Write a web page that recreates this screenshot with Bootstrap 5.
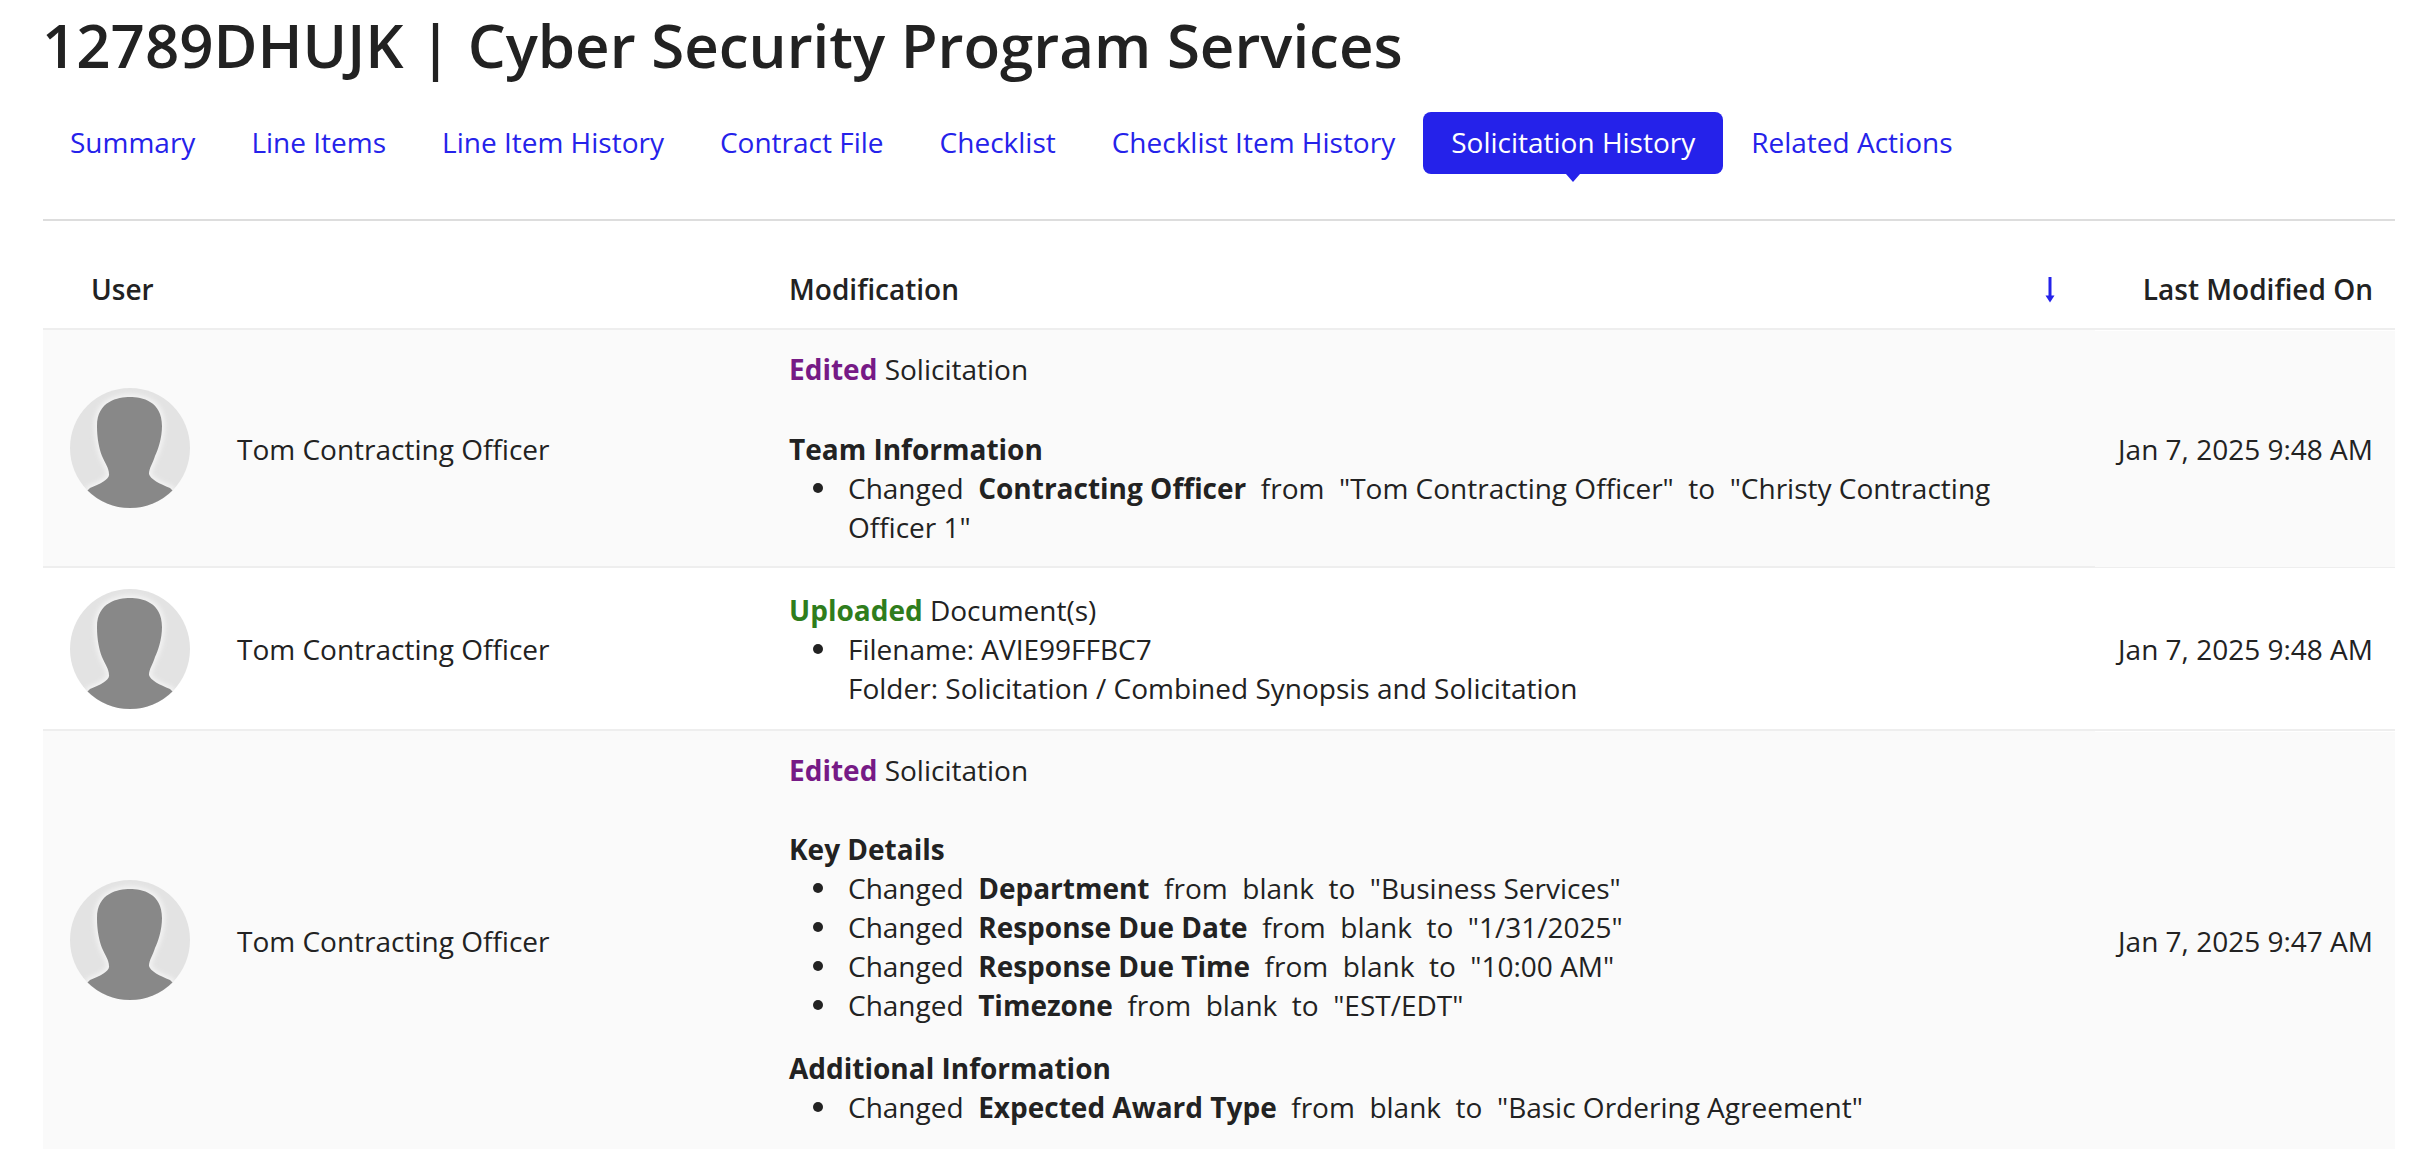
<!DOCTYPE html>
<html lang="en"><head><meta charset="utf-8"><title>Solicitation History</title>
<link href="https://cdn.jsdelivr.net/npm/bootstrap@5.3.0/dist/css/bootstrap.min.css" rel="stylesheet">
<style>
body{font-family:"Open Sans","Noto Sans",sans-serif;font-size:28px;line-height:39px;color:#222;background:#fff;overflow:hidden}
.pagewrap{padding:0 17px 0 43px}
.pagetitle{font-family:"Open Sans","Noto Sans",sans-serif;font-size:60px;line-height:80px;font-weight:600;margin:5px 0 27px -1px;color:#222}
.tabs{height:62px;margin-left:-1px}
.tabs .nav-link{font-size:28px;line-height:38px;padding:11px 28px 13px;color:#2522ea;border-radius:8px;position:relative}
.tabs .nav-link.active{background:#2522ea;color:#fff}
.tabs .nav-link.active::after{content:"";position:absolute;left:50%;top:100%;margin-left:-7px;border:7px solid transparent;border-top:8px solid #2522ea;border-bottom:0}
.rule{border-top:2px solid #ddd;margin-top:45px}
.hist{table-layout:fixed;width:100%;margin:0;--bs-table-bg:transparent;--bs-table-color:#222}
.hist th{font-weight:600;height:108px;padding:30px 0 0;vertical-align:middle;border-bottom:2px solid #eee}
.hist td{padding:20px 0;vertical-align:middle;border-bottom:2px solid #eee}
.hist tr.shade td{background:#fafafa}
.hist tbody tr:last-child td{border-bottom:0}
.col-u{width:720px}.col-d{width:300px}
.hist th.h-user{padding-left:48px}
.hist td.c-user{padding-left:27px}
.hist th.h-mod,.hist td.c-mod{padding-left:26px}
.hist th.h-date,.hist td.c-date{text-align:right;padding-right:22px}
.hist td.c-mod{padding-right:60px;vertical-align:top}
.hist tr.row-first td.c-mod{padding-bottom:19px}
.hist tr.row-first .sect{margin-top:41px}
.hist tr.row-up td.c-mod{padding-top:23px;padding-bottom:21px}
.hist tr.row-last td.c-mod{padding-bottom:22px}
.hist td.c-user span,.hist td.c-date{position:relative;top:1px}
.usr{gap:47px}
.avatar{width:120px;height:120px;flex:none}
.sortarrow{margin-right:40px}
.act-e{color:#761a86;font-weight:700}
.act-u{color:#2f7d1c;font-weight:700}
.sect{margin-top:40px;font-weight:700}
.sect2{margin-top:24px;font-weight:700}
.chg{margin:0;padding-left:59px;list-style:none}
.chg li{position:relative}
.chg li::before{content:"";position:absolute;left:-35px;top:14px;width:10px;height:10px;border-radius:50%;background:#222}
.chg b{font-weight:700}
</style></head><body>
<svg width="0" height="0" class="position-absolute">
<defs>
<filter id="soft" x="-20%" y="-20%" width="140%" height="140%"><feGaussianBlur stdDeviation="2"/></filter>
<clipPath id="disc"><circle cx="60" cy="60" r="60"/></clipPath>
<symbol id="person" viewBox="0 0 120 120">
<circle cx="60" cy="60" r="60" fill="#e3e3e3"/>
<g clip-path="url(#disc)">
<path d="M60 9C72 9 92 13 92 38C92 50 88 62 85 68C83 75 79 80 79 86C80 91 90 96 100 100C103 102 104 106 100 110L90 125H30L20 110C17 106 17 102 20 100C30 96 40 91 39 86C39 80 35 75 32 68C29 60 27 50 27 38C27 13 48 9 60 9Z" fill="#f2f2f2" stroke="#f2f2f2" stroke-width="6" filter="url(#soft)"/>
<path d="M60 9C72 9 92 13 92 38C92 50 88 62 85 68C83 75 79 80 79 86C80 91 90 96 100 100L104 104L90 125H30L16 104L20 100C30 96 40 91 39 86C39 80 35 75 32 68C29 60 27 50 27 38C27 13 48 9 60 9Z" fill="#888"/>
</g>
</symbol>
</defs>
</svg>
<div class="pagewrap">
<h1 class="pagetitle">12789DHUJK | Cyber Security Program Services</h1>
<ul class="nav nav-pills tabs">
<li class="nav-item"><a class="nav-link" href="#">Summary</a></li>
<li class="nav-item"><a class="nav-link" href="#">Line Items</a></li>
<li class="nav-item"><a class="nav-link" href="#">Line Item History</a></li>
<li class="nav-item"><a class="nav-link" href="#">Contract File</a></li>
<li class="nav-item"><a class="nav-link" href="#">Checklist</a></li>
<li class="nav-item"><a class="nav-link" href="#">Checklist Item History</a></li>
<li class="nav-item"><a class="nav-link active" href="#">Solicitation History</a></li>
<li class="nav-item"><a class="nav-link" href="#">Related Actions</a></li>
</ul>
<div class="rule"></div>
<table class="table hist">
<colgroup><col class="col-u"><col><col class="col-d"></colgroup>
<thead><tr>
<th class="h-user">User</th>
<th class="h-mod"><div class="d-flex justify-content-between align-items-center"><span>Modification</span>
<svg class="sortarrow" width="10" height="26" viewBox="0 0 10 26"><path d="M5 0V20" stroke="#2522ea" stroke-width="3" fill="none"/><path d="M0.5 18.5H9.5L5 25.5Z" fill="#2522ea"/></svg></div></th>
<th class="h-date">Last Modified On</th>
</tr></thead>
<tbody>
<tr class="shade row-first">
<td class="c-user"><div class="d-flex align-items-center usr"><svg class="avatar" viewBox="0 0 120 120"><use href="#person"/></svg><span>Tom Contracting Officer</span></div></td>
<td class="c-mod"><div><span class="act-e">Edited</span> Solicitation</div>
<div class="sect">Team Information</div>
<ul class="chg"><li>Changed&nbsp; <b>Contracting Officer</b>&nbsp; from&nbsp; "Tom Contracting Officer"&nbsp; to&nbsp; <span>"Christy Contracting</span><br><span>Officer 1"</span></li></ul></td>
<td class="c-date">Jan 7, 2025 9:48 AM</td>
</tr>
<tr class="row-up">
<td class="c-user"><div class="d-flex align-items-center usr"><svg class="avatar" viewBox="0 0 120 120"><use href="#person"/></svg><span>Tom Contracting Officer</span></div></td>
<td class="c-mod"><div><span class="act-u">Uploaded</span> Document(s)</div>
<ul class="chg"><li>Filename: AVIE99FFBC7<br>Folder: Solicitation / Combined Synopsis and Solicitation</li></ul></td>
<td class="c-date">Jan 7, 2025 9:48 AM</td>
</tr>
<tr class="shade row-last">
<td class="c-user"><div class="d-flex align-items-center usr"><svg class="avatar" viewBox="0 0 120 120"><use href="#person"/></svg><span>Tom Contracting Officer</span></div></td>
<td class="c-mod"><div><span class="act-e">Edited</span> Solicitation</div>
<div class="sect">Key Details</div>
<ul class="chg">
<li>Changed&nbsp; <b>Department</b>&nbsp; from&nbsp; blank&nbsp; to&nbsp; "Business Services"</li>
<li>Changed&nbsp; <b>Response Due Date</b>&nbsp; from&nbsp; blank&nbsp; to&nbsp; "1/31/2025"</li>
<li>Changed&nbsp; <b>Response Due Time</b>&nbsp; from&nbsp; blank&nbsp; to&nbsp; "10:00 AM"</li>
<li>Changed&nbsp; <b>Timezone</b>&nbsp; from&nbsp; blank&nbsp; to&nbsp; "EST/EDT"</li>
</ul>
<div class="sect2">Additional Information</div>
<ul class="chg"><li>Changed&nbsp; <b>Expected Award Type</b>&nbsp; from&nbsp; blank&nbsp; to&nbsp; "Basic Ordering Agreement"</li></ul></td>
<td class="c-date">Jan 7, 2025 9:47 AM</td>
</tr>
</tbody></table>
</div>
</body></html>
